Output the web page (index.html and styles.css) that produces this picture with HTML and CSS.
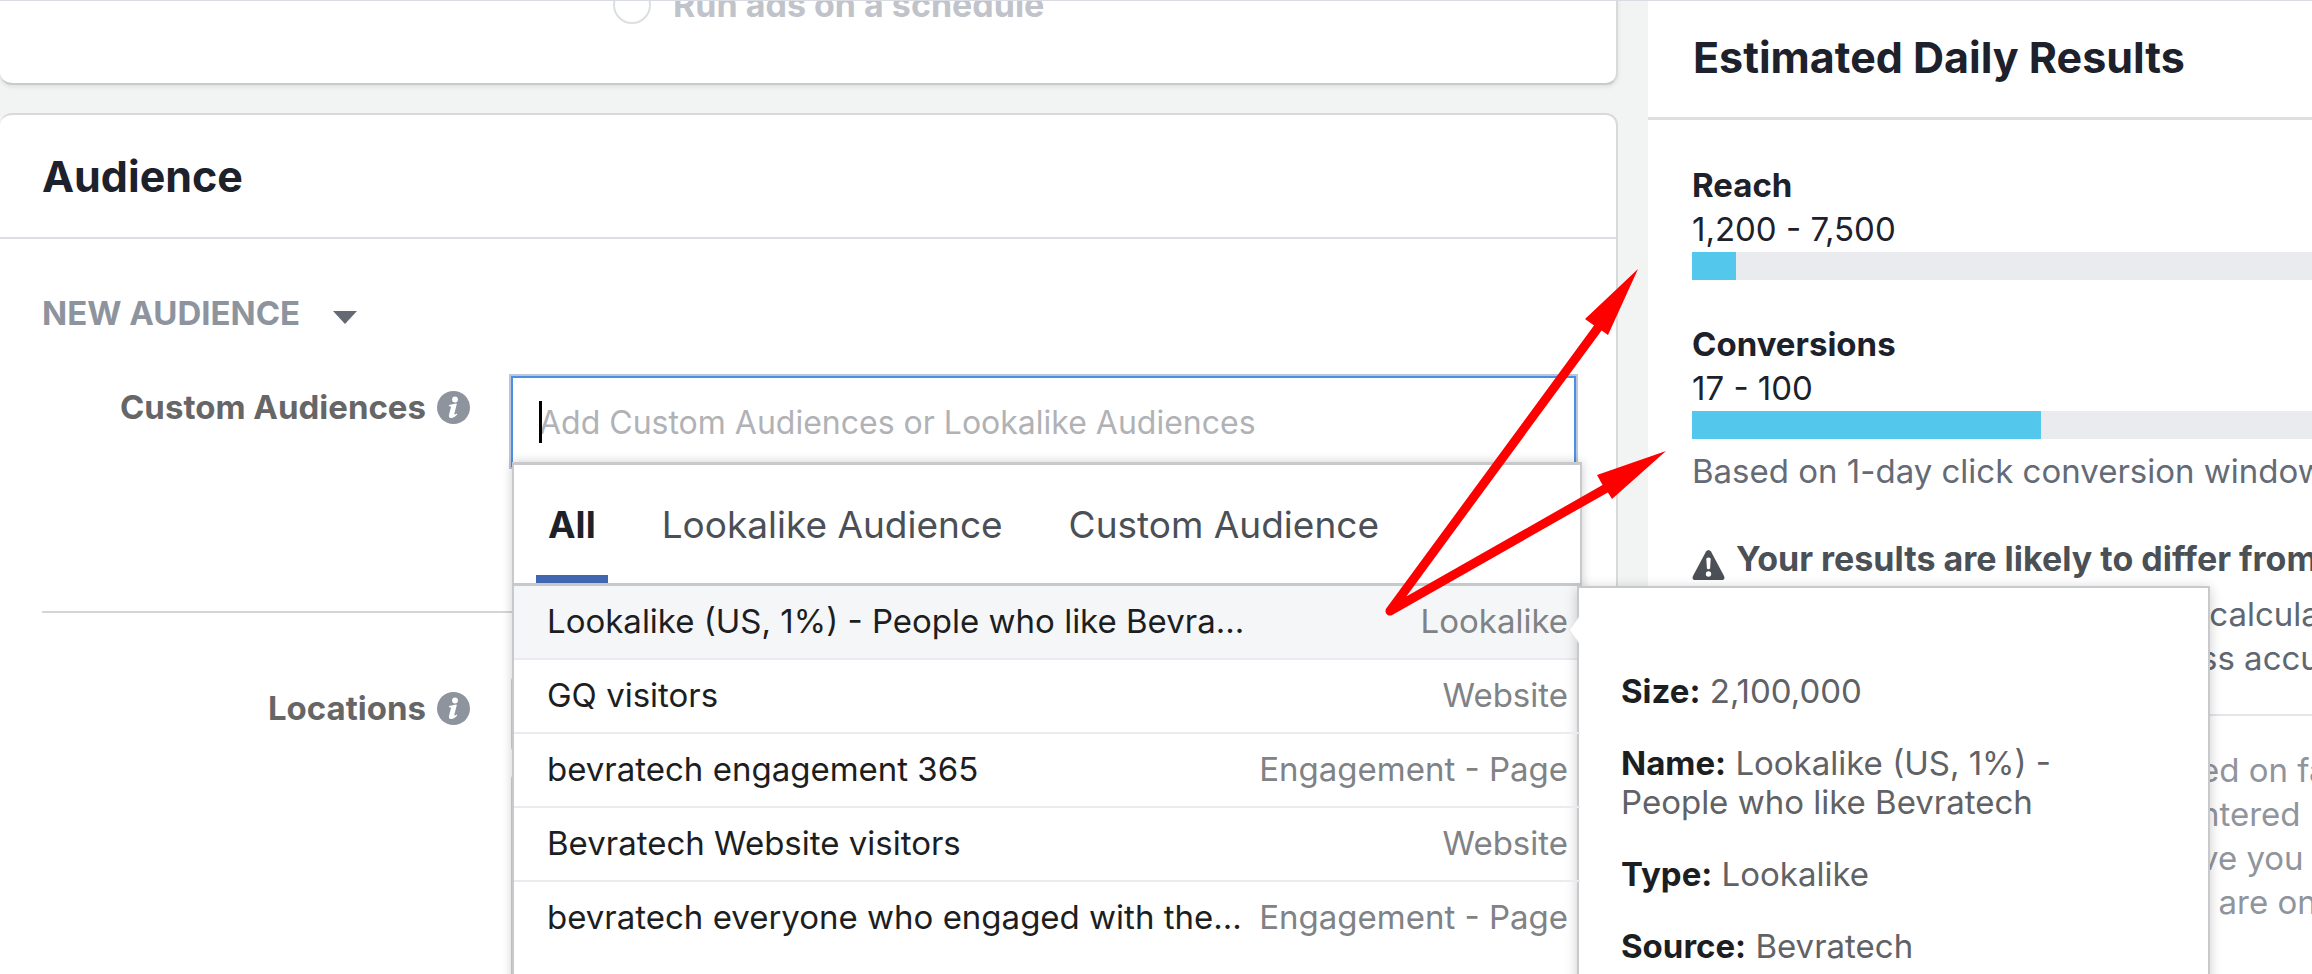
FILE: index.html
```html
<!DOCTYPE html>
<html lang="en">
<head>
<meta charset="utf-8">
<title>Ad set audience</title>
<link rel="stylesheet" href="styles.css">
</head>
<body>
<div class="page">
  <main class="main">
    <section class="card card-schedule">
      <label class="radio-row"><input type="radio" class="radio" name="schedule" disabled> Run ads on a schedule</label>
    </section>
    <section class="card card-audience">
      <h2 class="card-title">Audience</h2>
      <div class="card-body">
        <button type="button" class="audience-menu">NEW AUDIENCE
          <svg class="menu-arrow" viewBox="0 0 24 13" aria-hidden="true"><path d="M0 0h24L12 13z"/></svg>
        </button>
        <div class="form-row form-row-custom">
          <label class="form-label" for="custom">Custom Audiences
            <svg class="info" viewBox="0 0 33 33" aria-hidden="true"><circle cx="16.500" cy="16.500" r="16.500"/><circle class="info-mark" cx="18" cy="8.500" r="2.900"/><path class="info-mark" d="M12 14l7-1.500c.6 0 .9.400.7 1.100l-2.300 9c-.2 1 .7 1.200 2.300-.1l.6.800c-2.300 2.900-4.300 3.900-6.400 3.700-1.900-.2-2.300-1.600-1.800-3.500l1.800-7c.2-.9-.2-1.300-2-1.300z"/></svg>
          </label>
          <div class="field">
            <input class="search" id="custom" type="text" placeholder="Add Custom Audiences or Lookalike Audiences">
            <span class="text-caret"></span>
            <div class="dropdown">
              <div class="tabs">
                <button type="button" class="tab tab-active">All</button>
                <button type="button" class="tab">Lookalike Audience</button>
                <button type="button" class="tab">Custom Audience</button>
              </div>
              <ul class="options">
                <li class="option-item">
                  <button type="button" class="option option-active"><span>Lookalike (US, 1%) - People who like Bevra...</span><span class="kind">Lookalike</span></button>
                  <div class="details">
                    <svg class="details-notch" viewBox="0 0 11 26" aria-hidden="true"><path d="M11 0L1 13l10 13"/></svg>
                    <p><b>Size:</b> 2,100,000</p>
                    <p><b>Name:</b> Lookalike (US, 1%) -<br>People who like Bevratech</p>
                    <p><b>Type:</b> Lookalike</p>
                    <p><b>Source:</b> Bevratech</p>
                  </div>
                </li>
                <li class="option-item"><button type="button" class="option"><span>GQ visitors</span><span class="kind">Website</span></button></li>
                <li class="option-item"><button type="button" class="option"><span>bevratech engagement 365</span><span class="kind">Engagement - Page</span></button></li>
                <li class="option-item"><button type="button" class="option"><span>Bevratech Website visitors</span><span class="kind">Website</span></button></li>
                <li class="option-item"><button type="button" class="option"><span>bevratech everyone who engaged with the...</span><span class="kind">Engagement - Page</span></button></li>
              </ul>
            </div>
          </div>
        </div>
        <div class="form-row form-row-locations">
          <div class="form-label">Locations
            <svg class="info" viewBox="0 0 33 33" aria-hidden="true"><circle cx="16.500" cy="16.500" r="16.500"/><circle class="info-mark" cx="18" cy="8.500" r="2.900"/><path class="info-mark" d="M12 14l7-1.500c.6 0 .9.400.7 1.100l-2.300 9c-.2 1 .7 1.200 2.300-.1l.6.800c-2.300 2.900-4.300 3.900-6.400 3.700-1.900-.2-2.300-1.600-1.800-3.500l1.800-7c.2-.9-.2-1.300-2-1.300z"/></svg>
          </div>
          <div class="field field-stack">
            <div class="box"></div>
            <div class="box box-tall"></div>
          </div>
        </div>
      </div>
    </section>
  </main>
  <aside class="sidebar">
    <h2 class="sidebar-title">Estimated Daily Results</h2>
    <div class="sidebar-body">
      <div class="metric">
        <h3 class="metric-name">Reach</h3>
        <div>1,200 - 7,500</div>
        <div class="bar"><div class="bar-fill" style="width:44px"></div></div>
      </div>
      <div class="metric">
        <h3 class="metric-name">Conversions</h3>
        <div>17 - 100</div>
        <div class="bar"><div class="bar-fill" style="width:349px"></div></div>
        <p class="basis">Based on 1-day click conversion window</p>
      </div>
      <div class="warning">
        <svg class="warning-icon" viewBox="0 0 33 30" aria-hidden="true"><path d="M14 1.500q2.500-3 5 0L32 26q1.500 4-2.500 4h-26Q-.5 30 1 26z"/><path class="warning-mark" d="M14.300 8.500q2.200-2 4.400 0l-.6 10q-1.600 1.500-3.200 0z"/><circle class="warning-mark" cx="16.500" cy="24" r="2.700"/></svg>
        <span>Your results are likely to differ from</span>
      </div>
      <p class="note"> calcula
ss accu</p>
      <p class="note note-light">ed on fa
ntered
ve you
  are on</p>
    </div>
  </aside>
  <svg class="arrows" viewBox="0 0 300 360" aria-hidden="true">
    <path class="shaft" d="M220 65L10 351L230 226"/>
    <path d="M258 9L205 59l7 5 9 6 7 5zM286 191L217 215l5 9 5 7 5 8z"/>
  </svg>
</div>
</body>
</html>
```
FILE: styles.css
```css
* { box-sizing: border-box; }
body {
  margin: 0;
  height: 100vh;
  overflow: hidden;
  background: #f2f4f4;
  color: #1d212b;
  font: 33px/44px Inter, "Liberation Sans", sans-serif;
}
h2, h3, p, ul { margin: 0; padding: 0; }
button { border: 0; background: none; font: inherit; color: inherit; padding: 0; text-align: left; }
.page { position: relative; display: flex; gap: 30px; height: 100vh; overflow: hidden; border-top: 1px solid #d8dce2; }
.main { flex: 1; min-width: 0; display: flex; flex-direction: column; gap: 28px; }
.card { background: #fff; border: 2px solid #d8dada; border-left: 0; border-radius: 12px; }
.card-schedule { margin-top: -20px; padding: 0 0 56px 613px; border-bottom-color: #c9cacb; box-shadow: 0 2px 4px rgba(0, 0, 0, .08); }
.radio-row { display: flex; align-items: center; gap: 22px; color: #c0c3ca; font-size: 34px; font-weight: 700; }
.radio { appearance: none; width: 38px; height: 38px; margin: 0; border: 2px solid #dcdee2; border-radius: 50%; background: #fff; }
.card-audience { flex: 1 0 auto; }
.card-title { padding: 34px 42px; font-size: 43px; line-height: 54px; font-weight: 700; border-bottom: 2px solid #dcdfe3; }
.card-body { padding: 52px 40px 0 42px; }
.audience-menu { display: flex; align-items: center; gap: 33px; color: #8d949e; font-weight: 700; }
.menu-arrow { width: 24px; height: 13px; margin-top: 8px; fill: #646974; }
.form-row { display: flex; align-items: flex-start; gap: 41px; }
.form-row-custom { height: 237px; margin-top: 41px; border-bottom: 2px solid #d4d5d6; }
.form-row-locations { padding-top: 64px; }
.form-label { display: flex; align-items: center; justify-content: flex-end; gap: 11px; width: 428px; padding-top: 9px; color: #666; font-weight: 700; }
.info { width: 33px; height: 33px; fill: #8d949e; }
.info-mark { fill: #fff; }
.field { position: relative; flex: 1; }
.field-stack { display: flex; flex-direction: column; gap: 24px; }
.box { height: 74px; border: 2px solid #d0d2d6; border-radius: 4px; }
.box-tall { height: 240px; }
.search {
  display: block;
  width: 100%;
  height: 91px;
  padding: 2px 26px 0;
  border: 2px solid #4a90e2;
  outline: 0;
  box-shadow: 0 0 0 2px #bcc6d8;
  background: #fff;
  font: inherit;
  font-size: 32px;
}
.search::placeholder { color: #b0b2b6; opacity: 1; }
.text-caret { position: absolute; left: 28px; top: 25px; width: 3px; height: 42px; background: #000; }
.dropdown { position: absolute; left: 1px; right: -6px; top: 86px; z-index: 1; height: 600px; background: #fff; border: 2px solid #c8c9cd; border-top-width: 3px; box-shadow: 0 0 10px rgba(0, 0, 0, .2); }
.tabs { display: flex; gap: 42px; padding: 0 22px; border-bottom: 3px solid #c8c9cd; font-size: 37px; color: #4b4f56; }
.tab { padding: 38px 12px 28px; border-bottom: 8px solid transparent; white-space: nowrap; }
.tab-active { color: #1d2129; font-weight: 700; border-color: #4267b2; }
.options { list-style: none; }
.option-item { position: relative; }
.option { display: flex; justify-content: space-between; width: 100%; padding: 13px 12px 15px 33px; border-bottom: 2px solid #e9ebee; white-space: nowrap; color: #1c1e21; }
.option-item:last-child .option { border-color: transparent; }
.option-active { background: #f5f6f8; }
.kind { color: #808285; }
.details { position: absolute; left: calc(100% - 3px); top: 0; width: 633px; height: 500px; padding: 84px 42px 0; background: #fff; border: 2px solid #c8c9cd; box-shadow: 0 2px 12px rgba(0, 0, 0, .2); line-height: 39px; color: #606266; }
.details p { margin-bottom: 33px; }
.details b { font-weight: 700; color: #1c1e21; }
.details-notch { position: absolute; left: -11px; top: 29px; width: 11px; height: 26px; fill: #fff; stroke: #e2e4e6; }
.sidebar { width: 664px; background: #fff; overflow: hidden; }
.sidebar-title { padding: 29px 45px 33px; font-size: 43px; line-height: 54px; font-weight: 700; border-bottom: 3px solid #dde0e3; white-space: nowrap; }
.sidebar-body { padding: 43px 0 0 44px; white-space: nowrap; }
.metric { margin-bottom: 42px; }
.metric-name { font-size: inherit; font-weight: 700; }
.bar { height: 28px; margin-top: 1px; background: #e9ebee; }
.bar-fill { height: 100%; background: #54c7ec; }
.basis { margin-top: 10px; color: #646b76; }
.warning { display: flex; align-items: center; gap: 11px; padding-top: 2px; font-size: 34px; font-weight: 700; color: #4b4f56; }
.warning-icon { width: 33px; height: 30px; margin-top: 12px; flex: none; fill: #4b4f56; }
.warning-mark { fill: #fff; }
.note { padding: 11px 0 34px 508px; white-space: pre; color: #606770; border-bottom: 2px solid #e5e6e9; }
.note-light { padding-top: 32px; color: #90949c; border: 0; }
.arrows { position: absolute; z-index: 2; left: 1380px; top: 259px; width: 300px; height: 360px; fill: #f00; }
.shaft { fill: none; stroke: #f00; stroke-width: 9px; stroke-linejoin: round; }
```
